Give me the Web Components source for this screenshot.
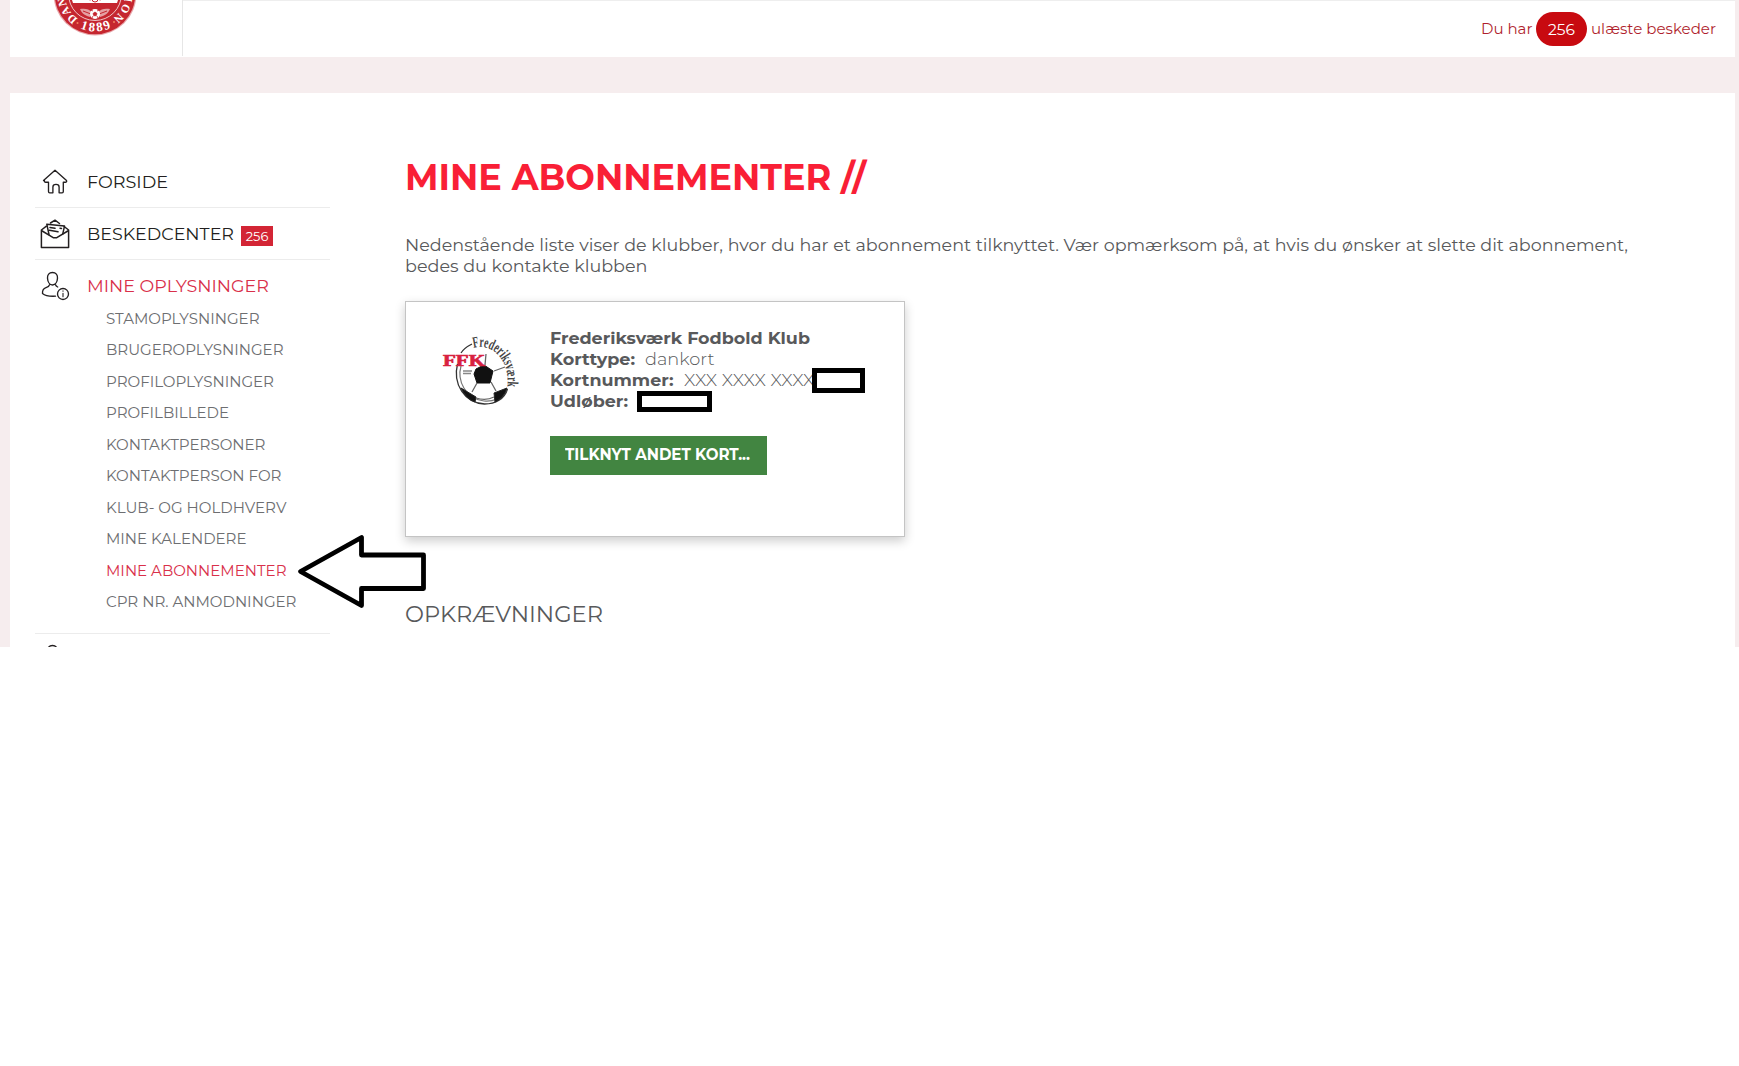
<!DOCTYPE html>
<html lang="da">
<head>
<meta charset="utf-8">
<title>Mine abonnementer</title>
<style>
	body { margin: 0; background: #fff; font-family: Montserrat, Inter, "Open Sans", sans-serif; color: #58595b; }
</style>
</head>
<body>
<member-page></member-page>

<script>
// Single line of text, stretched to a fixed measure
class FitText extends HTMLElement {
	constructor() {
		super();
		this.attachShadow({ mode: "open" });
	}

	connectedCallback() {
		this.shadowRoot.innerHTML = `
			<style>
				:host { display: inline-block; flex: none; text-align: left; vertical-align: top; }
				span { display: inline-block; white-space: pre; transform-origin: 0 50%; vertical-align: top; }
			</style>
			<span><slot></slot></span>
		`;
		this.fit();
	}

	fit() {
		const span = this.shadowRoot.querySelector("span");
		const width = Number(this.getAttribute("width"));
		const natural = span.getBoundingClientRect().width;
		if (!width || !natural) return;
		this.style.width = `${width}px`;
		span.style.transform = `scaleX(${width / natural})`;
	}
}

class MenuIcon extends HTMLElement {
	static icons = {
		home: `<path d="M3.5 13.5 15 3.300l11.500 10.200c.6 1-.3 2-1.500 1.700h-1.700v9.300c0 .8-.5 1.300-1.200 1.300h-3v-5.800c0-1.700-1.300-2.600-3.100-2.600s-3.100.9-3.100 2.600v5.800h-3.200c-.7 0-1.200-.5-1.200-1.300v-9.300h-2.500c-1.200.2-2-.7-1.500-1.700z"/>`,
		mail: `<path d="M1.400 11v17.600h27.200V11l-4.500-3.500M1.400 11l5-3.800M1.400 11.500l11.800 7.200h3.600l11.800-7.200M10.500 4 15 1.200 19.500 4.500"/><path d="m9 15.500-2.200-10.300 17.700 1.900-1.800 8M10 8.500l5 .8M9.500 11.300l8.500 1.500M20 9.200l1.500.2"/>`,
		user: `<path d="M12.500 1.500c-3.500 0-5.200 2.400-5 5.600.2 3.700 2.200 6.900 5 6.900s4.800-3.200 5-6.900c.2-3.200-1.500-5.600-5-5.600zM9.500 13.800c-.4 1.700-1.700 2.300-3.500 2.900-2.500.8-3.700 2.500-3.500 5.800 2.500 2.200 7.500 3 13 2.700M15.500 13.800c.3 1 1 1.700 2.200 2.200"/><circle cx="23" cy="23" r="5.500"/><path d="M23 22.200v3.600M23 19.900v.3" stroke-width="1.100"/>`,
	};

	constructor() {
		super();
		this.attachShadow({ mode: "open" });
	}

	connectedCallback() {
		this.shadowRoot.innerHTML = `
			<style>
				:host { display: block; width: 30px; height: 30px; }
				svg { display: block; fill: none; stroke: #231f20; stroke-width: 1.35; stroke-linejoin: round; stroke-linecap: round; }
				:host([name="mail"]) svg { stroke-width: 1.5; }
			</style>
			<svg width="30" height="30" viewBox="0 0 30 30">${MenuIcon.icons[this.getAttribute("name")]}</svg>
		`;
	}
}

class MenuRow extends HTMLElement {
	constructor() {
		super();
		this.attachShadow({ mode: "open" });
	}

	connectedCallback() {
		this.shadowRoot.innerHTML = `
			<style>
				:host { display: block; border-bottom: 1px solid #ececec; color: #231f20; }
				:host([active]) { color: #d9304a; padding-bottom: 15.5px; }
				.row { display: flex; align-items: center; height: 51px; padding-left: 5px; font-size: 17px; line-height: 24px; font-weight: 400; }
				menu-icon { margin-right: 17px; }
				.count { margin: 4px 0 0 7px; width: 32px; height: 20px; background: #d32535; color: #fff; font-size: 13px; line-height: 21px; text-align: center; }
				.sub { margin-top: -8.5px; padding-left: 71px; }
			</style>
			<div class="row">
				<menu-icon name="${this.getAttribute("icon")}"></menu-icon>
				<fit-text width="${this.getAttribute("width")}">${this.getAttribute("label")}</fit-text>
				${this.hasAttribute("count") ? `<span class="count">${this.getAttribute("count")}</span>` : ""}
			</div>
			${this.hasAttribute("active") ? `<div class="sub"><slot></slot></div>` : ""}
		`;
	}
}

class SideMenu extends HTMLElement {
	constructor() {
		super();
		this.attachShadow({ mode: "open" });
	}

	connectedCallback() {
		const items = [
			["STAMOPLYSNINGER", 153.5],
			["BRUGEROPLYSNINGER", 177.5],
			["PROFILOPLYSNINGER", 168],
			["PROFILBILLEDE", 123],
			["KONTAKTPERSONER", 159.5],
			["KONTAKTPERSON FOR", 175.5],
			["KLUB- OG HOLDHVERV", 180.5],
			["MINE KALENDERE", 140.5],
			["MINE ABONNEMENTER", 180.5],
			["CPR NR. ANMODNINGER", 190.5],
		];
		this.shadowRoot.innerHTML = `
			<style>
				:host { display: block; width: 295px; padding: 63px 0 0 25px; }
				.item { font-size: 15px; line-height: 31.5px; height: 31.5px; font-weight: 400; color: #6d6e71; }
				.item.current { color: #d9304a; }
				.next { padding: 10px 0 0 5px; }
			</style>
			<menu-row icon="home" label="FORSIDE" width="81"></menu-row>
			<menu-row icon="mail" label="BESKEDCENTER" width="147" count="256"></menu-row>
			<menu-row icon="user" label="MINE OPLYSNINGER" width="182" active>
				${items.map(([text, width]) => `<div class="item${text === "MINE ABONNEMENTER" ? " current" : ""}"><fit-text width="${width}">${text}</fit-text></div>`).join("")}
			</menu-row>
			<div class="next"><menu-icon name="user"></menu-icon></div>
		`;
	}
}

class UnionCrest extends HTMLElement {
	constructor() {
		super();
		this.attachShadow({ mode: "open" });
		this.shadowRoot.innerHTML = `
			<style>
				:host { display: block; box-sizing: border-box; width: 173px; height: 56px; border-right: 1px solid #e6e6e6; }
				svg { display: block; }
				text { font: bold 13px "Liberation Serif", serif; fill: #fff; }
				text.union { font-size: 11.5px; }
			</style>
			<svg width="171" height="56" viewBox="10 0 171 56">
				<circle cx="95" cy="-6" r="41.500" fill="#e9a9ad"/>
				<circle cx="95" cy="-6" r="40.300" fill="#c5262f"/>
				<circle cx="95" cy="-6" r="26.500" fill="#c5262f" stroke="#f0c4c6" stroke-width="1"/>
				<path d="M72 0h10l2-4h4l2 5 3-5h5l2 5 3-5h4l3 4h8l-1 3H73z" fill="#fff"/>
				<circle cx="95" cy="-1" r="3" fill="none" stroke="#c5262f"/>
				<path d="M80 9c5-1 9 0 12 3l-2 5c-4-1-8-3-10-8zM110 9c-5-1-9 0-12 3l2 5c4-1 8-3 10-8z" fill="#e5a0a3"/>
				<path d="m83 11 8 3M107 11l-8 3" stroke="#c5262f"/>
				<circle cx="95" cy="14" r="5" fill="#fff"/>
				<path d="m95 12 2 1.500-.8 2.200h-2.400L93 13.500zM91 10l2 1M99 10l-2 1M92 18l1-2M98 18l-1-2" fill="#c5262f" stroke="#c5262f" stroke-width=".8"/>
				<path id="year" d="M57.500-6a37.500 37.500 0 0 0 75 0" fill="none"/>
				<path id="left" d="M95 24A30 30 0 0 1 65-6" fill="none"/>
				<path id="right" d="M125-6A30 30 0 0 1 95 24" fill="none"/>
				<text><textPath href="#year" startOffset="43.500" textLength="32">1889</textPath></text>
				<text class="union"><textPath href="#left" startOffset="18" textLength="26">DAN</textPath></text>
				<text class="union"><textPath href="#right" startOffset="3" textLength="25">ION</textPath></text>
				<circle cx="77.500" cy="23" r="1" fill="#f08060"/>
				<circle cx="114" cy="22" r="1" fill="#f08060"/>
			</svg>
		`;
	}
}

class TopBar extends HTMLElement {
	constructor() {
		super();
		this.attachShadow({ mode: "open" });
	}

	connectedCallback() {
		this.shadowRoot.innerHTML = `
			<style>
				:host { display: flex; height: 57px; background: #fff; }
				.messages { flex: 1; display: flex; align-items: center; justify-content: flex-end; border-top: 1px solid #eee; padding-right: 19px; font-size: 15px; line-height: 20px; font-weight: 400; color: #b01f2e; }
				.badge { width: 51px; height: 34px; margin: 0 4px; border-radius: 17px; background: #c80a10; color: #fff; line-height: 35px; text-align: center; }
			</style>
			<union-crest></union-crest>
			<div class="messages">
				<fit-text width="51.500">Du har</fit-text>
				<span class="badge"><fit-text width="27">256</fit-text></span>
				<fit-text width="125">ulæste beskeder</fit-text>
			</div>
		`;
	}
}

class ClubLogo extends HTMLElement {
	constructor() {
		super();
		this.attachShadow({ mode: "open" });
		this.shadowRoot.innerHTML = `
			<style>
				:host { display: block; width: 80px; height: 76px; }
				svg { display: block; overflow: visible; }
				.name { font: bold 15.5px "Liberation Serif", serif; fill: #444; }
				.initials { font: bold 17px "Liberation Serif", serif; fill: #d8213f; stroke: #d8213f; stroke-width: .7; }
			</style>
			<svg width="80" height="76" viewBox="440 332 80 76">
				<path d="M461 353q3-5 11-9M457.500 364c-5 20 7 39 27 40 11 0 20-5 23-15" fill="none" stroke="#333" stroke-width="1.300"/>
				<path d="M461 366c-4 14 4 33 23 35 9 1 18-3 22-10" fill="none" stroke="#777" stroke-width="1.200"/>
				<path d="m476 369 8-4 9 6-3 12h-13l-3-9z" fill="#111" stroke="#111"/>
				<path d="m461 388 15 9-1 5q-9-3-14-14zM494 393l13-5q-3 10-12 14z" fill="#111" stroke="#222"/>
				<path d="m477 383-5 9M491 382l5 9M476 398q10 3 18-1M494 371l11-4M485 365l1-11" fill="none" stroke="#666" stroke-width="1.300"/>
				<path d="M463 371h9M463 373.500h8" stroke="#888" stroke-width="1.500"/>
				<path id="arc" d="M473.500 348c19-6 39 14 33 43" fill="none"/>
				<text class="name"><textPath href="#arc" textLength="61" lengthAdjust="spacingAndGlyphs">Frederiksværk</textPath></text>
				<text class="initials" x="443" y="365.500" textLength="42" lengthAdjust="spacingAndGlyphs">FFK</text>
			</svg>
		`;
	}
}

class SubscriptionCard extends HTMLElement {
	constructor() {
		super();
		this.attachShadow({ mode: "open" });
	}

	connectedCallback() {
		this.shadowRoot.innerHTML = `
			<style>
				:host { display: flex; box-sizing: border-box; width: 500px; height: 236px; border: 1px solid #c4c4c4; background: #fff; box-shadow: 0 4px 10px rgba(0, 0, 0, .2); }
				club-logo { margin: 30px 0 0 34px; }
				.info { margin: 26px 0 0 30px; font-size: 17px; font-weight: 300; }
				.line { display: flex; height: 21px; line-height: 21px; gap: 10px; }
				.label { font-weight: 700; }
				.mask { flex: none; box-sizing: border-box; border: 5px solid #000; background: #fff; position: relative; }
				.number { width: 53px; height: 25px; margin: -2px 0 0 -12px; }
				.expiry { width: 75px; height: 21px; margin-left: -1px; }
				button { display: block; width: 217px; height: 39px; margin-top: 24px; padding: 0 0 1px 15px; border: 0; background: #428541; color: #fff; font: 700 15.5px/38px Montserrat, Inter, sans-serif; text-align: left; }
			</style>
			<club-logo></club-logo>
			<div class="info">
				<div class="line"><fit-text class="label" width="260">Frederiksværk Fodbold Klub</fit-text></div>
				<div class="line"><fit-text class="label" width="85">Korttype:</fit-text><fit-text width="69.500">dankort</fit-text></div>
				<div class="line"><fit-text class="label" width="123.500">Kortnummer:</fit-text><fit-text width="130.500">XXX XXXX XXXX</fit-text><span class="mask number"></span></div>
				<div class="line"><fit-text class="label" width="78">Udløber:</fit-text><span class="mask expiry"></span></div>
				<button type="button"><fit-text width="185">TILKNYT ANDET KORT...</fit-text></button>
			</div>
		`;
	}
}

class PointerArrow extends HTMLElement {
	constructor() {
		super();
		this.attachShadow({ mode: "open" });
		this.shadowRoot.innerHTML = `
			<style>
				:host { display: block; width: 130px; height: 74px; }
			</style>
			<svg width="130" height="74" viewBox="297 534 130 74">
				<path d="M300.500 571.500 361.500 537.500V555H423.500V588.500H361.500V605.500Z" fill="#fff" stroke="#000" stroke-width="4.800" stroke-linejoin="round"/>
			</svg>
		`;
	}
}

class MemberPage extends HTMLElement {
	constructor() {
		super();
		this.attachShadow({ mode: "open" });
	}

	connectedCallback() {
		this.shadowRoot.innerHTML = `
			<style>
				:host { display: block; box-sizing: border-box; position: relative; width: 1739px; height: 647px; padding: 0 4px 0 10px; overflow: hidden; background: #f6edee; }
				.panel { display: flex; gap: 75px; height: 554px; margin-top: 36px; background: #fff; }
				main { padding-top: 64px; }
				h1 { margin: 0; height: 42px; font-size: 35.5px; line-height: 42px; font-weight: 700; color: #f91f36; }
				p { margin: 36px 0 24px; font-size: 17px; line-height: 21px; font-weight: 400; height: 42px; }
				p fit-text { display: block; }
				h2 { margin: 62px 0 0; font-size: 22px; line-height: 32px; font-weight: 400; }
				pointer-arrow { position: absolute; left: 297px; top: 534px; }
			</style>
			<top-bar></top-bar>
			<div class="panel">
				<side-menu></side-menu>
				<main>
					<h1><fit-text width="461">MINE ABONNEMENTER //</fit-text></h1>
					<p><fit-text width="1223">Nedenstående liste viser de klubber, hvor du har et abonnement tilknyttet. Vær opmærksom på, at hvis du ønsker at slette dit abonnement,</fit-text><fit-text width="242.500">bedes du kontakte klubben</fit-text></p>
					<subscription-card></subscription-card>
					<h2><fit-text width="198">OPKRÆVNINGER</fit-text></h2>
				</main>
			</div>
			<pointer-arrow></pointer-arrow>
		`;
	}
}

customElements.define("fit-text", FitText);
customElements.define("menu-icon", MenuIcon);
customElements.define("menu-row", MenuRow);
customElements.define("side-menu", SideMenu);
customElements.define("union-crest", UnionCrest);
customElements.define("top-bar", TopBar);
customElements.define("club-logo", ClubLogo);
customElements.define("subscription-card", SubscriptionCard);
customElements.define("pointer-arrow", PointerArrow);
customElements.define("member-page", MemberPage);
</script>
</body>
</html>
